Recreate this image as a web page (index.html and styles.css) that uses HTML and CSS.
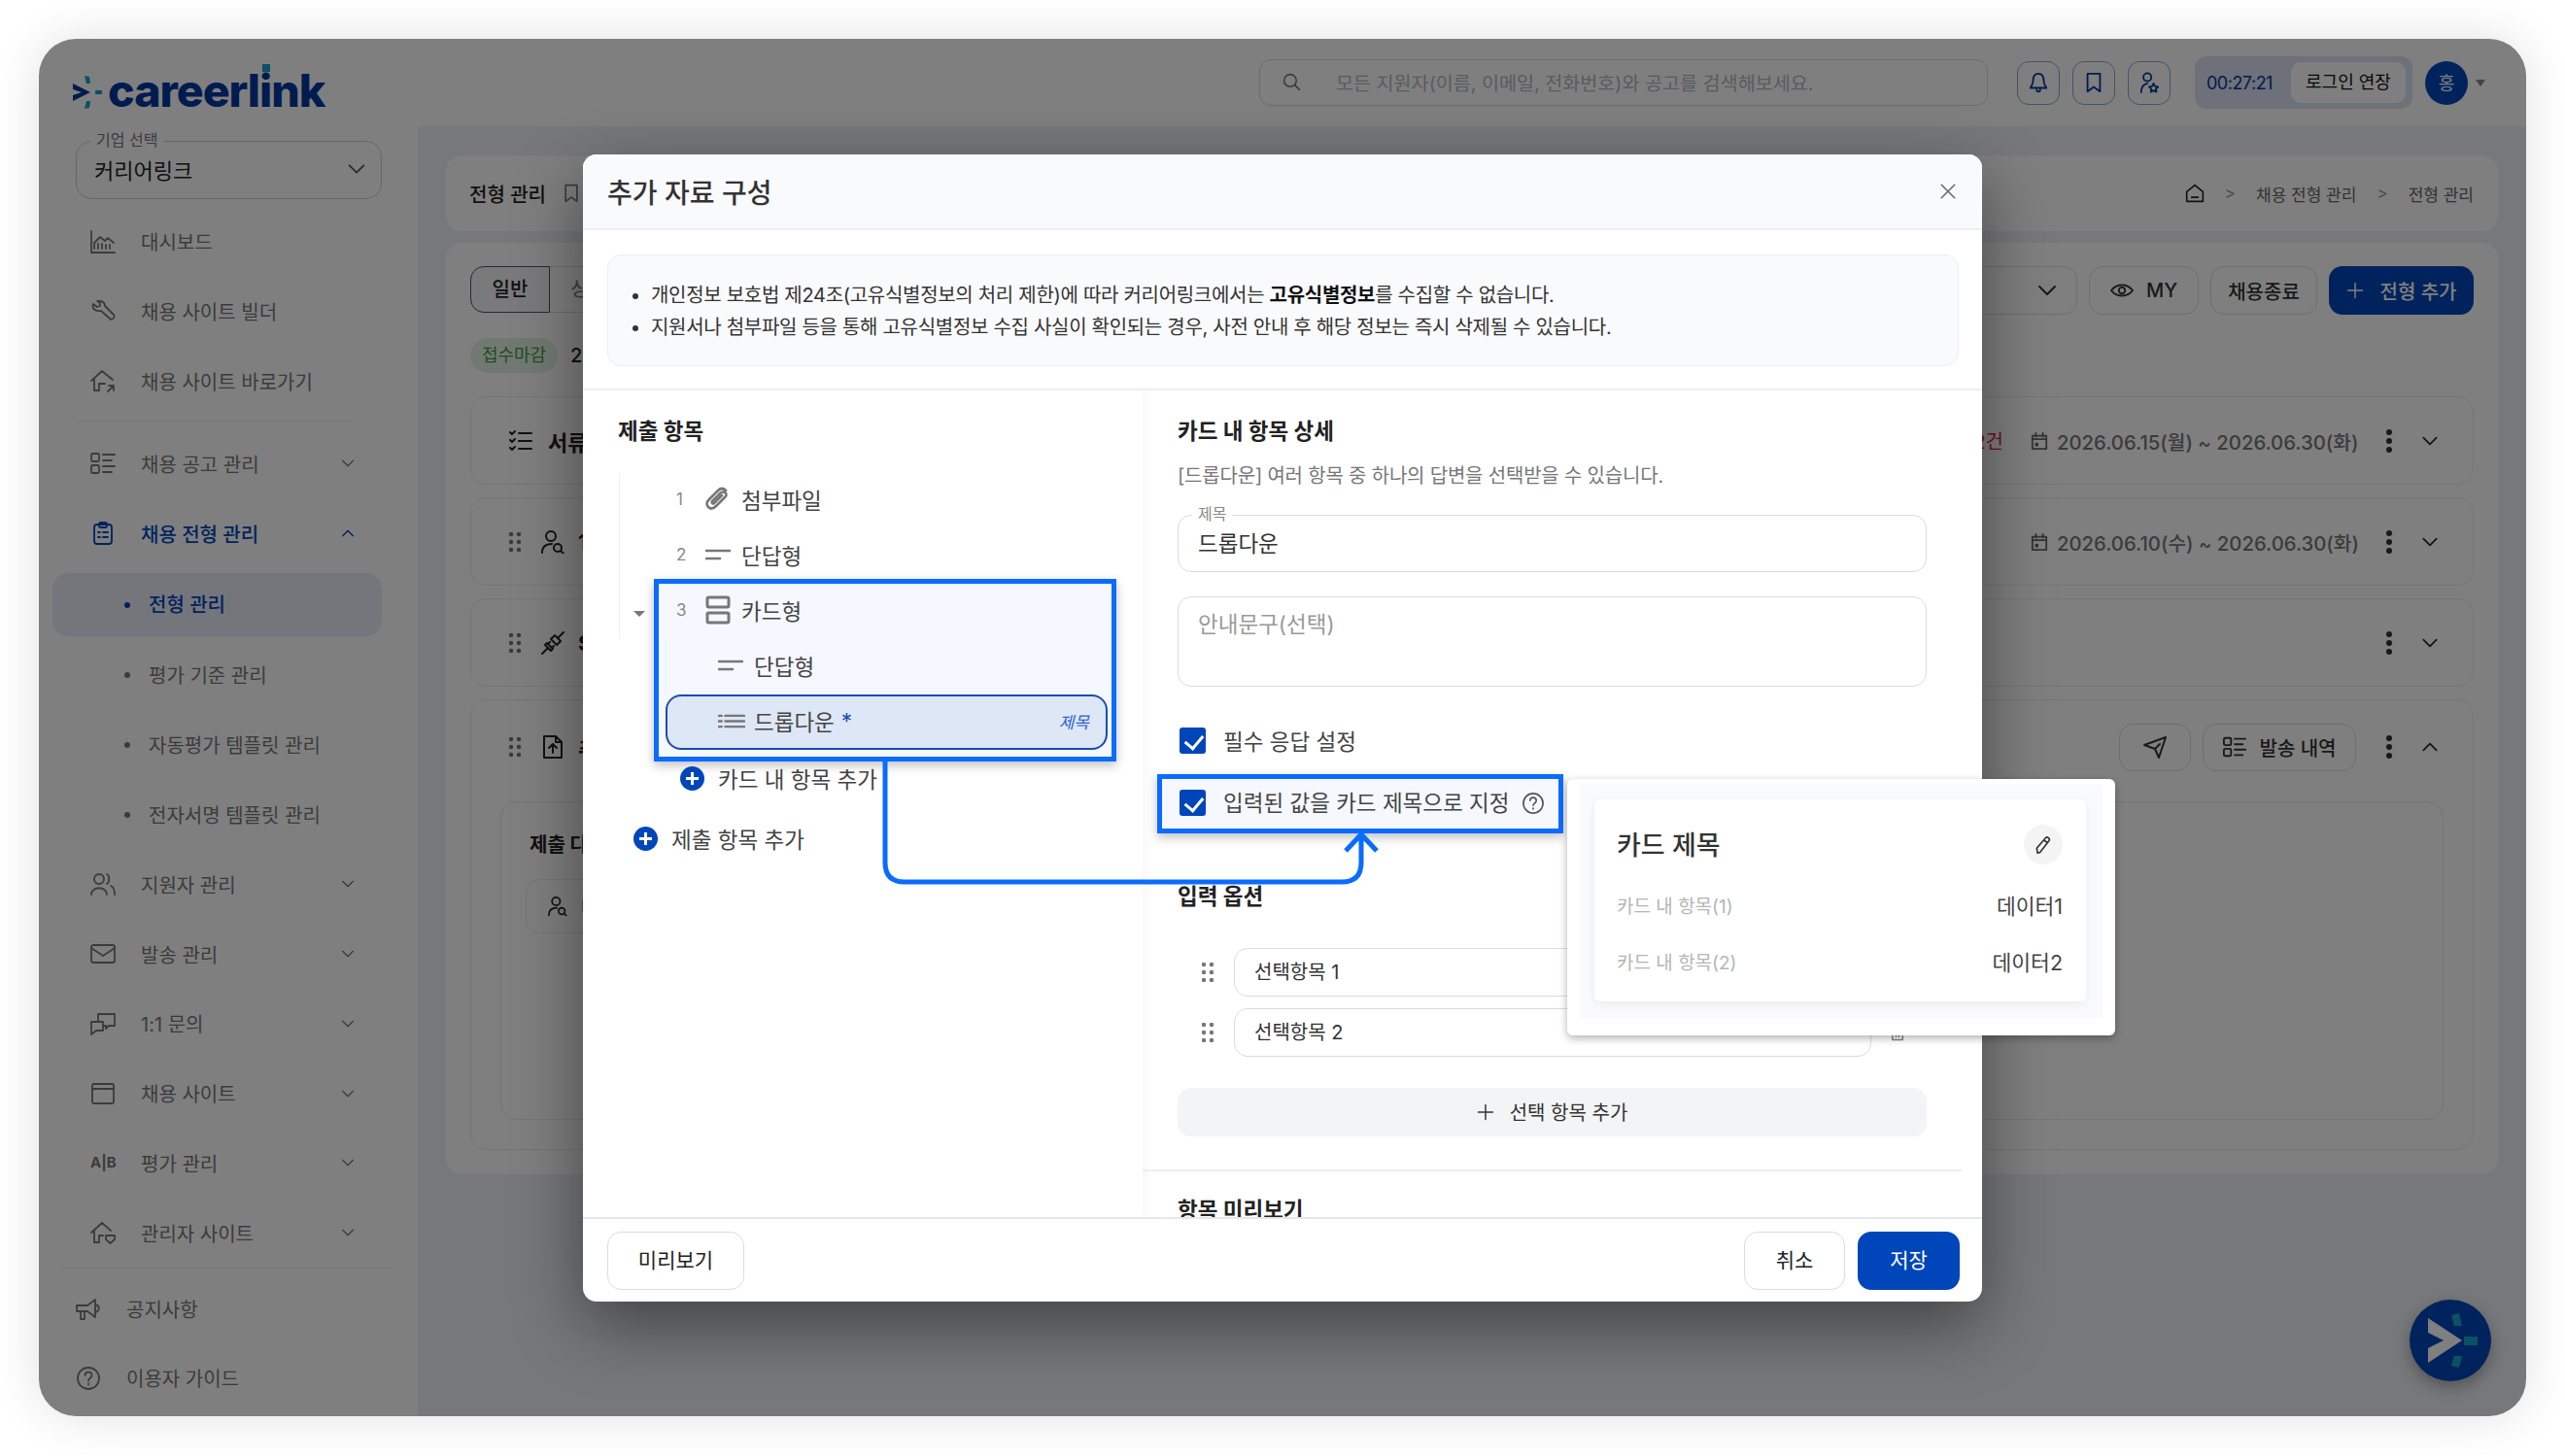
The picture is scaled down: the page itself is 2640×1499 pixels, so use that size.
FILE: index.html
```html
<!DOCTYPE html>
<html lang="ko">

<head>
    <meta charset="UTF-8">
    <title>추가 자료 구성</title>
    <link rel="stylesheet" href="styles.css">
</head>

<body>
    <svg class="sprite" xmlns="http://www.w3.org/2000/svg">
        <symbol id="i-chev" viewBox="0 0 24 24"><path d="M4 8l8 8 8-8"/></symbol>
        <symbol id="i-chev-up" viewBox="0 0 24 24"><path d="M4 16l8-8 8 8"/></symbol>
        <symbol id="i-dash" viewBox="0 0 26 24"><path d="M1 1v22h24M4 19v-6l6-6 5 4 3-3 6 5M8 19v-5M12 19v-5M16 19v-4M20 19v-4"/></symbol>
        <symbol id="i-wrench" viewBox="0 0 26 24"><path d="M3 4l4 3 3-1 0-3-3-2c4-1 8 1 8 5l9 9c2 3-2 6-4 4l-9-8C6 12 1 9 3 4z"/></symbol>
        <symbol id="i-house-link" viewBox="0 0 26 24"><path d="M1 12L12 2l11 9M4 10v12h5v-7h6M18 23l6-6M19 17h5v5"/></symbol>
        <symbol id="i-list" viewBox="0 0 26 24"><rect x="1" y="2" width="8" height="8" rx="1.5"/><rect x="1" y="14" width="8" height="8" rx="1.5"/><path d="M13 3h12M13 9h9M13 15h12M13 21h9"/></symbol>
        <symbol id="i-clip" viewBox="0 0 24 24"><rect x="3" y="3" width="18" height="20" rx="3"/><rect x="8" y="1" width="8" height="5" rx="1.5"/><path d="M7 11h2M12 11h5M7 16h2M12 16h5"/></symbol>
        <symbol id="i-users" viewBox="0 0 26 24"><circle cx="9" cy="7" r="5"/><path d="M1 23c0-9 16-9 16 0M17 2c3 1 3 8 0 10M21 14c3 1 4 5 4 9"/></symbol>
        <symbol id="i-mail" viewBox="0 0 26 24"><rect x="1" y="3" width="24" height="18" rx="2"/><path d="M1 6l12 8 12-8"/></symbol>
        <symbol id="i-chat" viewBox="0 0 26 24"><path d="M8 10V2h17v12h-6l-3 3v-3h-3M1 10h12v9H6l-5 4z"/></symbol>
        <symbol id="i-browser" viewBox="0 0 26 24"><rect x="2" y="2" width="22" height="20" rx="1.5"/><path d="M2 7h22"/></symbol>
        <symbol id="i-house-shield" viewBox="0 0 26 24"><path d="M1 12L12 2l9 8M4 10v12h5v-7h4M16 15h9v4l-4.500 4-4.500-4z"/></symbol>
        <symbol id="i-mega" viewBox="0 0 26 24"><path d="M1 8h11l8-6v18l-8-6H1zM5 14v8h4v-8M20 7c5 1 5 7 0 8"/></symbol>
        <symbol id="i-help" viewBox="0 0 24 24"><circle cx="12" cy="12" r="11"/><path d="M8.500 9c0-4.500 7-4.500 7 0 0 3-3.500 3-3.500 5.500M12 17.500v1"/></symbol>
        <symbol id="i-bookmark" viewBox="0 0 24 24"><path d="M5 2h14v20l-7-5-7 5z"/></symbol>
        <symbol id="i-bell" viewBox="0 0 24 24"><path d="M12 2c-5 0-6 4-6 8 0 4-2 6-3 8h18c-1-2-3-4-3-8 0-4-1-8-6-8zM10 20c0 3 4 3 4 0"/></symbol>
        <symbol id="i-person-star" viewBox="0 0 24 24"><circle cx="10" cy="6" r="4.500"/><path d="M3 23c0-6 2-9 7-10M17 13l1.700 3.300 3.300.5-2.500 2.400.6 3.300-3.100-1.600-3.100 1.600.6-3.300-2.500-2.400 3.300-.5z"/></symbol>
        <symbol id="i-search" viewBox="0 0 24 24"><circle cx="10" cy="10" r="8"/><path d="M16 16l6 6"/></symbol>
        <symbol id="i-home" viewBox="0 0 24 24"><path d="M2 10l10-8 10 8v12H2zM8 17h8"/></symbol>
        <symbol id="i-eye" viewBox="0 0 26 24"><path d="M1 12c6-8 18-8 24 0-6 8-18 8-24 0z"/><circle cx="13" cy="12" r="3.500"/></symbol>
        <symbol id="i-cal" viewBox="0 0 20 20"><path d="M2 4h16v15H2zM2 8h16M6 1v4M14 1v4M6 13h2v2H6z"/></symbol>
        <symbol id="i-check-list" viewBox="0 0 24 24"><path d="M1 3l2 2 3-3M1 11l2 2 3-3M1 19l2 2 3-3M10 4h13M10 12h13M10 20h13"/></symbol>
        <symbol id="i-person-find" viewBox="0 0 24 24"><circle cx="10" cy="6" r="5"/><path d="M1 23c0-7 4-9 10-9"/><circle cx="17" cy="18" r="4"/><path d="M20 21l3 3"/></symbol>
        <symbol id="i-plug" viewBox="0 0 24 24"><path d="M1 23l5-5M23 1l-5 5M4 14l6 6 2-2-6-6zM14 4l6 6-4 4-6-6zM9 11l-2 2M13 15l-2 2"/></symbol>
        <symbol id="i-file-up" viewBox="0 0 24 24"><path d="M3 1h12l6 6v16H3zM15 1v6h6M12 18v-8M8 13l4-4 4 4"/></symbol>
        <symbol id="i-send" viewBox="0 0 24 24"><path d="M1 10L23 2l-7 21-4-9zM12 14l5-5"/></symbol>
        <symbol id="i-trash" viewBox="0 0 24 24"><path d="M3 5h18M9 5V2h6v3M5 5v17h14V5M10 10v8M14 10v8"/></symbol>
        <symbol id="i-paper" viewBox="0 0 26 26"><path d="M21 4c-3-3-6-2-8 0L4 13c-3 3-3 6-1 8s5 2 8-1l9-9c2-2 2-4 0-5s-3-1-5 1l-8 8c-1 2 1 3 2 2l8-8"/></symbol>
        <symbol id="i-short" viewBox="0 0 26 14"><path d="M1 3h24M1 11h14"/></symbol>
        <symbol id="i-card" viewBox="0 0 26 30"><rect x="2" y="2" width="22" height="10" rx="1.500"/><rect x="2" y="18" width="22" height="10" rx="1.500"/></symbol>
        <symbol id="i-drop" viewBox="0 0 30 16"><path d="M1 2h3M1 8h3M1 14h3M8 2h21M8 8h21M8 14h21"/></symbol>
        <symbol id="i-pencil" viewBox="0 0 24 24"><path d="M5 22l-1-6L15 3c2-2 6 1 4 4L8 21zM13 6l4 3"/></symbol>
        <symbol id="i-dots" viewBox="0 0 12 20"><path d="M2 2v.01M10 2v.01M2 10v.01M10 10v.01M2 18v.01M10 18v.01"/></symbol>
        <symbol id="i-plus" viewBox="0 0 24 24"><path d="M12 2v20M2 12h20"/></symbol>
    </svg>

    <div class="window">
        <header class="topbar">
            <div class="logo">
                <svg class="logo-mark" viewBox="0 0 32 36">
                    <path class="navy" d="M1 9l18 9-18 9v-6l9-3-9-3z"/>
                    <path class="teal" d="M13 1l5 1 1 7-4 0zM13 35l5-1 1-7-4 0zM24 16h7v4h-7z"/>
                </svg>
                <span class="logo-text">careerl<span class="logo-i">i</span>nk</span>
            </div>
            <div class="search">
                <svg class="ic"><use href="#i-search"/></svg>
                <span>모든 지원자(이름, 이메일, 전화번호)와 공고를 검색해보세요.</span>
            </div>
            <div class="top-icons">
                <span class="top-btn"><svg class="ic"><use href="#i-bell"/></svg></span>
                <span class="top-btn"><svg class="ic"><use href="#i-bookmark"/></svg></span>
                <span class="top-btn"><svg class="ic"><use href="#i-person-star"/></svg></span>
            </div>
            <div class="timer">
                <span class="timer-text">00:27:21</span>
                <span class="timer-btn">로그인 연장</span>
            </div>
            <span class="avatar">홍</span>
            <span class="avatar-caret"></span>
        </header>

        <div class="layout">
            <aside class="sidebar">
                <div class="company">
                    <span class="company-label">기업 선택</span>
                    <span>커리어링크</span>
                    <svg class="ic"><use href="#i-chev"/></svg>
                </div>
                <nav class="nav">
                    <a class="nav-item"><svg class="ic"><use href="#i-dash"/></svg>대시보드</a>
                    <a class="nav-item"><svg class="ic"><use href="#i-wrench"/></svg>채용 사이트 빌더</a>
                    <a class="nav-item"><svg class="ic"><use href="#i-house-link"/></svg>채용 사이트 바로가기</a>
                    <hr class="nav-line">
                    <a class="nav-item"><svg class="ic"><use href="#i-list"/></svg>채용 공고 관리<svg class="ic chev"><use href="#i-chev"/></svg></a>
                    <a class="nav-item active"><svg class="ic"><use href="#i-clip"/></svg>채용 전형 관리<svg class="ic chev"><use href="#i-chev-up"/></svg></a>
                    <a class="sub-item current">전형 관리</a>
                    <a class="sub-item">평가 기준 관리</a>
                    <a class="sub-item">자동평가 템플릿 관리</a>
                    <a class="sub-item">전자서명 템플릿 관리</a>
                    <a class="nav-item"><svg class="ic"><use href="#i-users"/></svg>지원자 관리<svg class="ic chev"><use href="#i-chev"/></svg></a>
                    <a class="nav-item"><svg class="ic"><use href="#i-mail"/></svg>발송 관리<svg class="ic chev"><use href="#i-chev"/></svg></a>
                    <a class="nav-item"><svg class="ic"><use href="#i-chat"/></svg>1:1 문의<svg class="ic chev"><use href="#i-chev"/></svg></a>
                    <a class="nav-item"><svg class="ic"><use href="#i-browser"/></svg>채용 사이트<svg class="ic chev"><use href="#i-chev"/></svg></a>
                    <a class="nav-item"><span class="ab">A|B</span>평가 관리<svg class="ic chev"><use href="#i-chev"/></svg></a>
                    <a class="nav-item"><svg class="ic"><use href="#i-house-shield"/></svg>관리자 사이트<svg class="ic chev"><use href="#i-chev"/></svg></a>
                </nav>
                <hr class="nav-line wide">
                <a class="nav-item foot"><svg class="ic"><use href="#i-mega"/></svg>공지사항</a>
                <a class="nav-item foot"><svg class="ic"><use href="#i-help"/></svg>이용자 가이드</a>
            </aside>

            <main class="main">
                <div class="panel crumbs">
                    <span class="page-title">전형 관리</span>
                    <svg class="ic page-mark"><use href="#i-bookmark"/></svg>
                    <span class="crumb-path">
                        <svg class="ic home"><use href="#i-home"/></svg>
                        <i class="sep">&gt;</i><span>채용 전형 관리</span>
                        <i class="sep">&gt;</i><span>전형 관리</span>
                    </span>
                </div>
                <div class="panel content">
                    <div class="tool-row">
                        <div class="tabs">
                            <span class="tab on">일반</span>
                            <span class="tab">상시</span>
                        </div>
                        <div class="tools">
                            <span class="tool filter"><svg class="ic"><use href="#i-chev"/></svg></span>
                            <span class="tool my"><svg class="ic eye"><use href="#i-eye"/></svg>MY</span>
                            <span class="tool closed">채용종료</span>
                            <span class="tool primary"><svg class="ic"><use href="#i-plus"/></svg>전형 추가</span>
                        </div>
                    </div>
                    <div class="status-row"><span class="status">접수마감</span><span class="status-n">2</span></div>

                    <div class="step">
                        <svg class="ic step-first"><use href="#i-check-list"/></svg><b>서류</b>
                        <div class="step-right">
                            <span class="step-count">2건</span>
                            <svg class="ic cal"><use href="#i-cal"/></svg>
                            <span class="step-date">2026.06.15(월) ~ 2026.06.30(화)</span>
                            <span class="kebab"></span>
                            <svg class="ic chev"><use href="#i-chev"/></svg>
                        </div>
                    </div>
                    <div class="step">
                        <svg class="ic handle"><use href="#i-dots"/></svg>
                        <svg class="ic step-ic"><use href="#i-person-find"/></svg><b>1</b>
                        <div class="step-right">
                            <svg class="ic cal"><use href="#i-cal"/></svg>
                            <span class="step-date">2026.06.10(수) ~ 2026.06.30(화)</span>
                            <span class="kebab"></span>
                            <svg class="ic chev"><use href="#i-chev"/></svg>
                        </div>
                    </div>
                    <div class="step">
                        <svg class="ic handle"><use href="#i-dots"/></svg>
                        <svg class="ic step-ic"><use href="#i-plug"/></svg><b>S</b>
                        <div class="step-right">
                            <span class="kebab"></span>
                            <svg class="ic chev"><use href="#i-chev"/></svg>
                        </div>
                    </div>
                    <div class="step open">
                        <div class="step-head">
                            <svg class="ic handle"><use href="#i-dots"/></svg>
                            <svg class="ic step-ic"><use href="#i-file-up"/></svg><b>추</b>
                            <div class="step-right">
                                <span class="tool small send"><svg class="ic"><use href="#i-send"/></svg></span>
                                <span class="tool small log"><svg class="ic list"><use href="#i-list"/></svg>발송 내역</span>
                                <span class="kebab"></span>
                                <svg class="ic chev"><use href="#i-chev-up"/></svg>
                            </div>
                        </div>
                        <div class="nested">
                            <b>제출 다</b>
                            <div class="nested-item"><svg class="ic"><use href="#i-person-find"/></svg><span>다</span></div>
                        </div>
                    </div>
                </div>
            </main>
        </div>

        <span class="fab">
            <svg viewBox="0 0 84 84">
                <path class="fab-arrow" d="M19 19L54 42 19 65V50L35 42 19 34z"/>
                <path class="fab-teal" d="M43 16l8-2 3 13-8 0zM43 68l8 2 3-12-8 0zM56 38h14v9H56z"/>
            </svg>
        </span>

        <div class="dim"></div>

        <section class="modal">
            <div class="modal-head">
                <h2>추가 자료 구성</h2>
                <svg class="ic close" viewBox="0 0 24 24"><path d="M3 3l18 18M21 3L3 21"/></svg>
            </div>
            <div class="modal-notice">
                <ul class="notice">
                    <li>개인정보 보호법 제24조(고유식별정보의 처리 제한)에 따라 커리어링크에서는 <b>고유식별정보</b>를 수집할 수 없습니다.</li>
                    <li>지원서나 첨부파일 등을 통해 고유식별정보 수집 사실이 확인되는 경우, 사전 안내 후 해당 정보는 즉시 삭제될 수 있습니다.</li>
                </ul>
            </div>
            <div class="modal-body">
                <div class="left-pane">
                    <h3>제출 항목</h3>
                    <div class="tree">
                        <div class="tree-row"><span class="num">1</span><svg class="ic t-ic"><use href="#i-paper"/></svg>첨부파일</div>
                        <div class="tree-row"><span class="num">2</span><svg class="ic t-short"><use href="#i-short"/></svg>단답형</div>
                        <div class="hl-tree">
                            <span class="caret"></span>
                            <div class="tree-row"><span class="num">3</span><svg class="ic t-ic t-card"><use href="#i-card"/></svg>카드형</div>
                            <div class="tree-row child"><svg class="ic t-short"><use href="#i-short"/></svg>단답형</div>
                            <div class="tree-row child picked"><svg class="ic t-drop"><use href="#i-drop"/></svg>드롭다운 <em class="req">*</em><em class="title-tag">제목</em></div>
                        </div>
                        <div class="add-row inner"><span class="add-dot"></span>카드 내 항목 추가</div>
                        <div class="add-row"><span class="add-dot"></span>제출 항목 추가</div>
                    </div>
                </div>
                <div class="right-pane">
                    <h3>카드 내 항목 상세</h3>
                    <p class="desc">[드롭다운] 여러 항목 중 하나의 답변을 선택받을 수 있습니다.</p>
                    <div class="field">
                        <span class="field-label">제목</span>
                        드롭다운
                    </div>
                    <div class="field area">안내문구(선택)</div>
                    <label class="check first"><span class="box"></span>필수 응답 설정</label>
                    <label class="check hl-check"><span class="box"></span>입력된 값을 카드 제목으로 지정<svg class="ic help"><use href="#i-help"/></svg></label>
                    <h3 class="opt-title">입력 옵션</h3>
                    <div class="opt">
                        <svg class="ic handle"><use href="#i-dots"/></svg>
                        <span class="opt-input">선택항목 1</span>
                        <svg class="ic trash"><use href="#i-trash"/></svg>
                    </div>
                    <div class="opt">
                        <svg class="ic handle"><use href="#i-dots"/></svg>
                        <span class="opt-input">선택항목 2</span>
                        <svg class="ic trash"><use href="#i-trash"/></svg>
                    </div>
                    <div class="opt-add"><svg class="ic"><use href="#i-plus"/></svg>선택 항목 추가</div>
                    <hr class="pane-line">
                    <h3 class="preview-title">항목 미리보기</h3>
                </div>
            </div>
            <div class="modal-foot">
                <button class="btn">미리보기</button>
                <button class="btn cancel">취소</button>
                <button class="btn save">저장</button>
            </div>
        </section>

        <svg class="connector" viewBox="40 40 2560 1418">
            <path d="M911 784V888Q911 908 931 908H1381Q1401 908 1401 888V860M1385 876L1401 859L1417 876"/>
        </svg>

        <div class="card-pop">
            <div class="card-pop-in">
                <div class="preview-card">
                    <div class="preview-head">
                        <span>카드 제목</span>
                        <span class="edit"><svg class="ic"><use href="#i-pencil"/></svg></span>
                    </div>
                    <div class="preview-row"><span>카드 내 항목(1)</span><b>데이터1</b></div>
                    <div class="preview-row"><span>카드 내 항목(2)</span><b>데이터2</b></div>
                </div>
            </div>
        </div>
    </div>
</body>

</html>
```

FILE: styles.css
```css
* {
    box-sizing: border-box;
}

body {
    margin: 0;
    padding: 40px;
    background: #fff;
    font-family: Inter, "Noto Sans CJK KR", sans-serif;
    color: #222;
}

.sprite {
    display: none;
}

.ic {
    display: block;
    width: 24px;
    height: 24px;
    flex: none;
    fill: none;
    stroke: currentColor;
    stroke-width: 2;
    stroke-linecap: round;
    stroke-linejoin: round;
}

h2, h3, p, ul {
    margin: 0;
    padding: 0;
}

/* window */
.window {
    position: relative;
    width: 2560px;
    height: 1418px;
    border-radius: 38px;
    background: #fff;
    overflow: hidden;
    box-shadow: 0 0 50px rgba(0, 0, 0, .12);
}

.dim {
    position: absolute;
    inset: 0;
    background: rgba(0, 0, 0, .5);
}

/* top bar */
.topbar {
    display: flex;
    align-items: center;
    height: 90px;
    padding: 0 42px 0 34px;
}

.logo {
    display: flex;
    align-items: center;
    gap: 5px;
    margin-top: 16px;
    margin-right: auto;
}

.logo-mark {
    width: 32px;
    height: 36px;
    margin-top: 4px;
}

.navy {
    fill: #00379e;
}

.teal {
    fill: #1a9fc7;
}

.logo-text {
    font-size: 46.5px;
    line-height: 44px;
    font-weight: 800;
    letter-spacing: -1px;
    color: #00379e;
}

.logo-i {
    position: relative;
}

.logo-i::before {
    content: "";
    position: absolute;
    left: 3px;
    top: 1px;
    width: 8px;
    height: 8px;
    background: #1a9fc7;
}

.search {
    display: flex;
    align-items: center;
    gap: 36px;
    width: 750px;
    height: 48px;
    padding: 0 0 2px 23px;
    border: 1px solid #d6d8dc;
    border-radius: 12px;
    font-size: 19.6px;
    color: #b4b6ba;
}

.search .ic {
    width: 19px;
    height: 19px;
    color: #777;
}

.top-icons {
    display: flex;
    gap: 13px;
    margin-left: 30px;
}

.top-btn {
    display: flex;
    align-items: center;
    justify-content: center;
    width: 44px;
    height: 45px;
    border: 1px solid #8fa3cf;
    border-radius: 12px;
    color: #00379e;
}

.top-btn .ic {
    width: 22px;
    height: 26px;
}

.timer {
    display: flex;
    align-items: center;
    justify-content: space-between;
    width: 224px;
    height: 54px;
    margin-left: 25px;
    padding: 0 7px 0 12px;
    border-radius: 12px;
    background: #dde2f2;
    font-size: 18px;
}

.timer-text {
    color: #00379e;
    letter-spacing: -.5px;
}

.timer-btn {
    width: 118px;
    height: 42px;
    line-height: 42px;
    text-align: center;
    border-radius: 10px;
    background: #fff;
    color: #111;
}

.avatar {
    width: 44px;
    height: 45px;
    margin-left: 13px;
    border-radius: 50%;
    background: #0046bb;
    color: #fff;
    font-size: 18px;
    line-height: 45px;
    text-align: center;
}

.avatar-caret {
    width: 0;
    height: 0;
    margin-left: 8px;
    border-style: solid;
    border-width: 7px 5px 0;
    border-color: #888 transparent transparent;
}

/* sidebar */
.layout {
    display: flex;
    height: 1328px;
}

.sidebar {
    width: 390px;
    flex: none;
    padding: 15px 37px 0 14px;
}

.company {
    position: relative;
    display: flex;
    align-items: center;
    justify-content: space-between;
    width: 315px;
    height: 60px;
    margin-left: 24px;
    padding: 0 14px 2px 18px;
    border: 1px solid #ccc;
    border-radius: 16px;
    font-size: 22px;
    color: #222;
}

.company .ic {
    width: 22px;
    height: 22px;
    color: #555;
}

.company-label {
    position: absolute;
    left: 14px;
    top: -13px;
    padding: 0 6px;
    background: #fff;
    font-size: 16px;
    line-height: 22px;
    color: #777;
}

.nav {
    margin-top: 8px;
}

.nav-item {
    display: flex;
    align-items: center;
    height: 71.8px;
    padding: 0 27px 0 39px;
    font-size: 20px;
    color: #777;
}

.nav-item > .ic:first-child,
.ab {
    width: 26px;
    height: 24px;
    margin-right: 26px;
    flex: none;
    stroke-width: 1.800;
}

.ab {
    font-size: 15px;
    font-weight: 700;
    line-height: 24px;
    white-space: nowrap;
}

.nav-item .chev {
    width: 16px;
    height: 16px;
    margin-left: auto;
    margin-right: 0;
}

.nav-item.active {
    color: #0046bb;
    font-weight: 500;
}

.nav-line {
    height: 1px;
    margin: 5px 30px 7px 24px;
    border: 0;
    background: #eee;
}

.nav-line.wide {
    margin: 0 -12px 6px 9px;
}

.sub-item {
    position: relative;
    display: block;
    height: 71.8px;
    padding-left: 99px;
    font-size: 20px;
    line-height: 74px;
    color: #777;
}

.sub-item::before {
    content: "";
    position: absolute;
    left: 74px;
    top: 33px;
    width: 6px;
    height: 6px;
    border-radius: 50%;
    background: currentColor;
}

.sub-item.current {
    height: 65px;
    margin: 5px 0 4px;
    border-radius: 16px;
    background: #e9ecf6;
    color: #0046bb;
    font-weight: 500;
    line-height: 67px;
}

.sub-item.current::before {
    top: 30px;
}

.nav-item.foot {
    padding-left: 24px;
    height: 71px;
}

/* main */
.main {
    flex: 1;
    padding: 30px 29px 0;
    background: #eef0f5;
}

.panel {
    border-radius: 16px;
    background: #fff;
}

.crumbs {
    display: flex;
    align-items: center;
    height: 78px;
    padding: 0 25px 0 24px;
}

.page-title {
    font-size: 20px;
    font-weight: 500;
}

.page-mark {
    width: 20px;
    height: 24px;
    margin-left: 16px;
    color: #777;
}

.crumb-path {
    display: flex;
    align-items: center;
    margin-left: auto;
    font-size: 17px;
    color: #666;
}

.crumb-path .home {
    width: 20px;
    height: 20px;
    color: #222;
}

.sep {
    margin: 0 21px;
    font-style: normal;
    color: #999;
}

.content {
    height: 959px;
    margin-top: 12px;
    padding: 24px 25px;
}

.tool-row {
    display: flex;
    justify-content: space-between;
    height: 50px;
}

.tabs {
    display: flex;
    height: 48px;
    border: 1px solid #ddd;
    border-radius: 14px;
    width: 300px;
}

.tab {
    width: 82px;
    font-size: 20px;
    font-weight: 500;
    line-height: 46px;
    text-align: center;
    color: #888;
}

.tab.on {
    margin: -1px;
    height: 48px;
    border: 1px solid #555;
    border-radius: 14px 0 0 14px;
    color: #222;
    background: #f5f5f8;
}

.tools {
    display: flex;
    gap: 12px;
}

.tool {
    display: flex;
    align-items: center;
    justify-content: center;
    height: 50px;
    padding: 0 18px;
    border: 1px solid #ddd;
    border-radius: 14px;
    font-size: 20px;
    font-weight: 500;
    white-space: nowrap;
    color: #333;
}

.tool .eye {
    width: 24px;
    height: 22px;
    margin-right: 13px;
}

.my {
    width: 113px;
    padding: 0;
}

.closed {
    width: 110px;
    padding: 0;
}

.filter {
    width: 200px;
    justify-content: flex-end;
}

.primary {
    width: 149px;
    padding: 0;
    border: 0;
    background: #0046bb;
    color: #fff;
}

.primary .ic {
    width: 18px;
    height: 18px;
    margin-right: 17px;
}

.status-row {
    display: flex;
    align-items: center;
    gap: 13px;
    height: 36px;
    margin-top: 24px;
}

.status {
    width: 90px;
    height: 36px;
    border-radius: 18px;
    background: #e4f3e4;
    color: #3f9a45;
    font-size: 18px;
    line-height: 36px;
    text-align: center;
}

.status-n {
    font-size: 20px;
    font-weight: 500;
}

.step {
    display: flex;
    align-items: center;
    width: 2062px;
    height: 91px;
    margin-top: 13px;
    padding-left: 39px;
    border: 1px solid #eaeaea;
    border-radius: 16px;
}

.status-row + .step {
    margin-top: 24px;
}

.step b {
    font-size: 22px;
    font-weight: 700;
}

.step .handle {
    width: 12px;
    height: 20px;
    color: #777;
    stroke-width: 4.500;
}

.step-first {
    margin-right: 16px;
}

.step-ic {
    margin: 0 14px 0 21px;
}

.step-right {
    display: flex;
    align-items: center;
    margin-left: auto;
    padding-right: 34px;
}

.step-count {
    margin-right: 28px;
    font-size: 20px;
    color: #d8263a;
}

.cal {
    width: 18px;
    height: 18px;
    color: #666;
}

.step-date {
    width: 308px;
    margin-left: 9px;
    font-size: 20.3px;
    font-weight: 500;
    white-space: nowrap;
    color: #777;
}

.kebab {
    position: relative;
    width: 6px;
    height: 6px;
    margin: 0 29px 0 31px;
    border-radius: 50%;
    background: #333;
    box-shadow: 0 -9px 0 #333, 0 9px 0 #333;
}

.step-right .chev {
    width: 20px;
    height: 20px;
}

.step.open {
    display: block;
    height: 464px;
    padding: 0;
}

.step-head {
    display: flex;
    align-items: center;
    height: 96px;
    padding-left: 39px;
}

.small {
    height: 49px;
    padding: 0;
    margin-left: 12px;
}

.send {
    width: 74px;
}

.log {
    width: 158px;
}

.small .list {
    margin-right: 14px;
}

.nested {
    width: 2000px;
    height: 328px;
    margin: 8px 0 0 30px;
    padding: 28px 29px;
    border: 1px solid #eaeaea;
    border-radius: 16px;
}

.nested b {
    font-size: 20px;
}

.nested-item {
    display: flex;
    align-items: center;
    gap: 14px;
    width: 300px;
    height: 56px;
    margin: 22px 0 0 -4px;
    padding-left: 22px;
    border: 1px solid #eaeaea;
    border-radius: 14px;
    font-size: 18px;
}

.nested-item .ic {
    width: 20px;
    height: 20px;
}

.fab {
    position: absolute;
    left: 2440px;
    top: 1298px;
    width: 84px;
    height: 84px;
    border-radius: 50%;
    background: #0046bb;
    box-shadow: 0 6px 16px rgba(0, 0, 0, .3);
}

.fab svg {
    display: block;
}

.fab-arrow {
    fill: #fff;
}

.fab-teal {
    fill: #16a3c9;
}

/* modal */
.modal {
    position: absolute;
    left: 560px;
    top: 119px;
    display: flex;
    flex-direction: column;
    width: 1440px;
    height: 1181px;
    border-radius: 14px;
    background: #fff;
    box-shadow: 0 24px 70px rgba(0, 0, 0, .45);
    overflow: hidden;
}

.modal-head {
    display: flex;
    align-items: center;
    justify-content: space-between;
    height: 78px;
    padding: 0 26px 0 25px;
    border-bottom: 2px solid #eceef0;
    background: #f9fafc;
}

.modal-head h2 {
    font-size: 28px;
    font-weight: 500;
    color: #333;
}

.close {
    width: 18px;
    height: 18px;
    color: #666;
}

.modal-notice {
    height: 165px;
    padding: 25px 24px 0 25px;
    border-bottom: 2px solid #eceef0;
}

.notice {
    height: 115px;
    padding: 25px 0 0 44px;
    border: 1px solid #eceef1;
    border-radius: 14px;
    background: #f9fafb;
    font-size: 20px;
    line-height: 33px;
    letter-spacing: -.3px;
    color: #333;
}

.notice b {
    font-weight: 700;
    color: #111;
}

.modal-body {
    display: flex;
    flex: 1;
    min-height: 0;
    overflow: hidden;
    border-bottom: 2px solid #e6e7e9;
}

.left-pane {
    width: 576px;
    flex: none;
    padding: 27px 0 0 36px;
    box-shadow: 4px 0 10px rgba(0, 0, 0, .035);
}

.modal-body h3 {
    font-size: 22.5px;
    line-height: 30px;
    font-weight: 700;
    color: #222;
}

.tree {
    position: relative;
    margin-top: 28px;
    font-size: 22.5px;
    color: #444;
}

.tree::before {
    content: "";
    position: absolute;
    left: 1px;
    top: 1px;
    width: 1px;
    height: 170px;
    background: #f0f0f0;
}

.tree-row {
    display: flex;
    align-items: center;
    height: 57px;
    padding-left: 60px;
    padding-bottom: 3px;
}

.num {
    width: 30px;
    font-size: 17px;
    color: #888;
}

.t-ic {
    width: 26px;
    height: 26px;
    margin-right: 11px;
    color: #777;
    stroke-width: 2.600;
}

.t-card {
    height: 30px;
    stroke-width: 3;
}

.t-short {
    width: 26px;
    height: 14px;
    margin-right: 11px;
    color: #777;
    stroke-width: 2.600;
}

.hl-tree {
    position: relative;
    width: 476px;
    height: 188px;
    margin: -5px 0 0 37px;
    border: 5px solid #0a6cff;
    background: #f5f8fe;
    box-shadow: 0 4px 10px rgba(0, 0, 0, .25);
}

.hl-tree .tree-row {
    padding-left: 18px;
}

.caret {
    position: absolute;
    left: -26px;
    top: 28px;
    border-style: solid;
    border-width: 6px 6px 0;
    border-color: #777 transparent transparent;
}

.hl-tree .child {
    margin-left: 7px;
    padding-left: 53px;
    border-left: 1px solid #eceff5;
}

.hl-tree .picked {
    height: 57px;
    width: 455px;
    padding-left: 52px;
    border: 2px solid #1b4bb5;
    border-radius: 16px;
    background: #dee7f6;
}

.t-drop {
    width: 28px;
    height: 15px;
    margin-right: 9px;
    color: #777;
    stroke-width: 2.600;
}

.req {
    margin-left: 7px;
    font-style: normal;
    color: #1b4bb5;
}

.title-tag {
    margin-left: auto;
    margin-right: 17px;
    font-size: 17px;
    color: #2d62d0;
}

.add-row {
    display: flex;
    align-items: center;
    gap: 14px;
    height: 36px;
    margin-top: 26px;
    padding-left: 16px;
    padding-bottom: 2px;
}

.add-row.inner {
    margin-top: 0;
    padding-left: 64px;
}

.add-dot {
    position: relative;
    width: 25px;
    height: 25px;
    border-radius: 50%;
    background: #0046bb;
}

.add-dot::before {
    content: "";
    position: absolute;
    left: 6px;
    top: 11px;
    width: 13px;
    height: 3px;
    background: #fff;
}

.add-dot::after {
    content: "";
    position: absolute;
    left: 11px;
    top: 6px;
    width: 3px;
    height: 13px;
    background: #fff;
}

.right-pane {
    flex: 1;
    padding: 27px 57px 0 36px;
}

.desc {
    margin-top: 16px;
    font-size: 20px;
    line-height: 30px;
    letter-spacing: -.2px;
    color: #777;
}

.field {
    position: relative;
    height: 59px;
    margin-top: 25px;
    padding-left: 20px;
    border: 1px solid #dcdcdc;
    border-radius: 14px;
    font-size: 22.5px;
    line-height: 57px;
    color: #333;
}

.field-label {
    position: absolute;
    left: 14px;
    top: -13px;
    padding: 0 6px;
    background: #fff;
    font-size: 16px;
    line-height: 22px;
    color: #888;
}

.field.area {
    height: 93px;
    margin-top: 25px;
    line-height: 56px;
    color: #999;
}

.check {
    display: flex;
    align-items: center;
    height: 28px;
    margin-top: 42px;
    padding-left: 2px;
    font-size: 22.5px;
    color: #444;
}

.box {
    position: relative;
    width: 27px;
    height: 27px;
    margin-right: 18px;
    border-radius: 3px;
    background: #0046bb;
}

.box::after {
    content: "";
    position: absolute;
    left: 9px;
    top: 4px;
    width: 9px;
    height: 15px;
    border: solid #fff;
    border-width: 0 3px 3px 0;
    transform: rotate(40deg);
}

.check.hl-check {
    width: 418px;
    height: 61px;
    margin: 20px 0 0 -21px;
    padding: 0 0 5px 18px;
    border: 5px solid #0a6cff;
    background: #f5f8fe;
    box-shadow: 0 4px 10px rgba(0, 0, 0, .25);
}

.hl-check .box {
    margin-top: 3px;
}

.check.first {
    padding-bottom: 3px;
}

.check.first .box {
    margin-top: 2px;
}

.help {
    width: 22px;
    height: 22px;
    margin: 3px 0 0 14px;
    color: #555;
    stroke-width: 1.800;
}

.modal-body .opt-title {
    margin-top: 50px;
    margin-bottom: 38px;
}

.opt {
    display: flex;
    align-items: center;
    height: 50px;
    margin-bottom: 12px;
}

.opt .handle {
    width: 12px;
    height: 20px;
    margin: 0 21px 0 25px;
    color: #777;
    stroke-width: 4.500;
}

.opt-input {
    width: 656px;
    height: 50px;
    padding-left: 20px;
    border: 1px solid #dcdcdc;
    border-radius: 14px;
    font-size: 20px;
    line-height: 48px;
    color: #333;
}

.trash {
    width: 18px;
    height: 20px;
    margin-left: 18px;
    color: #888;
}

.opt-add {
    display: flex;
    align-items: center;
    justify-content: center;
    gap: 16px;
    height: 50px;
    margin-top: 32px;
    padding-bottom: 2px;
    border-radius: 14px;
    background: #f3f4f6;
    font-size: 20px;
    color: #333;
}

.opt-add .ic {
    width: 18px;
    height: 18px;
    margin-top: 2px;
}

.pane-line {
    height: 2px;
    margin: 34px -36px 0 -36px;
    border: 0;
    background: #eee;
}

.modal-body .preview-title {
    margin-top: 25px;
}

.modal-foot {
    display: flex;
    align-items: center;
    gap: 13px;
    height: 85px;
    padding: 0 23px 0 25px;
}

.btn {
    width: 141px;
    height: 60px;
    padding-bottom: 4px;
    border: 1px solid #dcdcdc;
    border-radius: 14px;
    background: #fff;
    font: inherit;
    font-size: 21px;
    color: #222;
}

.cancel {
    width: 104px;
    margin-left: auto;
}

.save {
    width: 105px;
    border: 0;
    background: #0046bb;
    color: #fff;
}

.connector {
    position: absolute;
    left: 0;
    top: 0;
    width: 2560px;
    height: 1418px;
    fill: none;
    stroke: #0a6cff;
    stroke-width: 5;
    pointer-events: none;
}

.card-pop {
    position: absolute;
    left: 1573px;
    top: 762px;
    width: 564px;
    height: 264px;
    padding: 6px 13px 18px;
    border-radius: 6px;
    background: #fff;
    box-shadow: 0 3px 8px rgba(0, 0, 0, .3);
}

.card-pop-in {
    height: 240px;
    padding: 15px 17px 17px 15px;
    background: #f9fafb;
}

.preview-card {
    height: 208px;
    padding: 26px 24px 0 23px;
    border-radius: 6px;
    background: #fff;
    box-shadow: 0 3px 10px rgba(0, 0, 0, .06);
}

.preview-head {
    display: flex;
    align-items: center;
    justify-content: space-between;
    height: 41px;
    margin-bottom: 12px;
    font-size: 27px;
    font-weight: 500;
    color: #333;
}

.preview-head > span:first-child {
    margin-top: -2px;
}

.edit {
    display: flex;
    align-items: center;
    justify-content: center;
    width: 40px;
    height: 41px;
    border-radius: 50%;
    background: #f4f4f4;
    color: #333;
}

.edit .ic {
    width: 20px;
    height: 20px;
}

.preview-row {
    display: flex;
    align-items: center;
    justify-content: space-between;
    height: 58px;
    font-size: 19px;
    color: #b5b5b5;
}

.preview-row b {
    font-size: 21.5px;
    font-weight: 400;
    color: #444;
}
```
